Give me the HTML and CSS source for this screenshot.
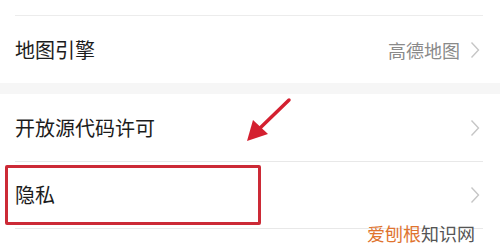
FILE: index.html
```html
<!DOCTYPE html>
<html lang="zh">
<head>
<meta charset="utf-8">
<link rel="stylesheet" href="styles.css">
</head>
<body>
<div class="page">
  <div class="top"></div>
  <div class="row">
    <span class="label">地图引擎</span>
    <span class="right"><span class="value">高德地图</span><svg class="chev" width="10" height="18" viewBox="0 0 10 18"><polyline points="1.5,1.5 8.5,9 1.5,16.5" fill="none" stroke="#c6c6c6" stroke-width="1.4"/></svg></span>
  </div>
  <div class="band"></div>
  <div class="row divided">
    <span class="label">开放源代码许可</span>
    <span class="right"><svg class="chev" width="10" height="18" viewBox="0 0 10 18"><polyline points="1.5,1.5 8.5,9 1.5,16.5" fill="none" stroke="#c6c6c6" stroke-width="1.4"/></svg></span>
  </div>
  <div class="row divided">
    <span class="label">隐私</span>
    <span class="right"><svg class="chev" width="10" height="18" viewBox="0 0 10 18"><polyline points="1.5,1.5 8.5,9 1.5,16.5" fill="none" stroke="#c6c6c6" stroke-width="1.4"/></svg></span>
  </div>
  <div class="row next"></div>

  <div class="highlight"></div>
  <svg class="arrow" width="60" height="60" viewBox="0 0 60 60">
    <line x1="49" y1="7" x2="18" y2="37" stroke="#d42030" stroke-width="3.5" stroke-linecap="round"/>
    <polygon points="7,48 13,27 28,41" fill="#d42030"/>
  </svg>
  <div class="mark"><span class="orange">爱刨根</span><span class="gray">知识网</span></div>
</div>
</body>
</html>
```
FILE: styles.css
```css
html, body {
  margin: 0;
  padding: 0;
  background: #fff;
}
.page {
  position: relative;
  width: 500px;
  height: 252px;
  overflow: hidden;
  font-family: "Noto Sans CJK SC", "Noto Sans", sans-serif;
  background: #fff;
}
.top {
  height: 15px;
  margin: 0 17px 0 15px;
  border-bottom: 1px solid #ececec;
}
.row {
  height: 67px;
  display: flex;
  align-items: center;
  justify-content: space-between;
  padding: 0 20px 0 15px;
  position: relative;
}
.row.divided + .row::before {
  content: "";
  position: absolute;
  top: 0;
  left: 15px;
  right: 17px;
  border-top: 1px solid #e8e8e8;
}
.label {
  font-size: 20px;
  color: #1c1c1c;
  line-height: 1;
}
.right {
  display: flex;
  align-items: center;
  gap: 10px;
}
.value {
  font-size: 18px;
  color: #8a8a8a;
  line-height: 1;
}
.chev {
  display: block;
}
.band {
  height: 11px;
  background: #f6f6f6;
}
.row.next {
  height: 40px;
}
.highlight {
  position: absolute;
  left: 5px;
  top: 165px;
  width: 250px;
  height: 54px;
  border: 3px solid #cc2a36;
  border-radius: 2px;
}
.arrow {
  position: absolute;
  left: 240px;
  top: 93px;
}
.mark {
  position: absolute;
  left: 367px;
  top: 221px;
  font-size: 18px;
  line-height: 24px;
}
.orange { color: #e0742f; }
.gray { color: #555; }
```
